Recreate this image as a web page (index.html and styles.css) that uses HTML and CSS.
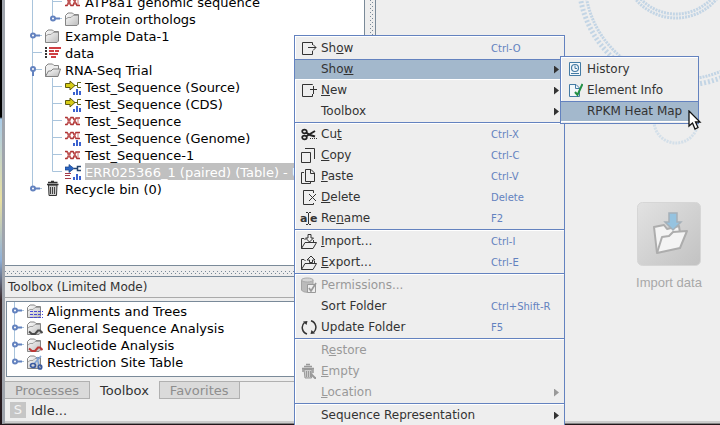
FILE: index.html
```html
<!DOCTYPE html>
<html lang="en">
<head>
<meta charset="utf-8">
<title>Workbench</title>
<link rel="stylesheet" href="styles.css">
</head>
<body>
<svg class="sprite" aria-hidden="true">
  <defs>
    <linearGradient id="metal" x1="0" y1="0" x2="1" y2="1"><stop offset="0" stop-color="#fff"/><stop offset="1" stop-color="#bbb"/></linearGradient>
    <linearGradient id="tile" x1="0" y1="0" x2="1" y2="1"><stop offset="0" stop-color="#e2e2e2"/><stop offset="1" stop-color="#c2c2c2"/></linearGradient>
    <symbol id="bar" viewBox="0 0 20 17"><path class="guide" d="M7.5 0V17"/></symbol>
    <symbol id="tee" viewBox="0 0 20 17"><path class="guide" d="M7.5 0V17M8 8.500H17"/></symbol>
    <symbol id="ell" viewBox="0 0 20 17"><path class="guide" d="M7.500 0V8.500H17"/></symbol>
    <symbol id="closed" viewBox="0 0 20 17"><path class="guide" d="M13 8.500H17"/><path class="knob" d="M10 8.500H15"/><circle class="knob ring" cx="8" cy="8.500" r="2"/></symbol>
    <symbol id="opened" viewBox="0 0 20 17"><path class="guide" d="M10 8.500H17"/><path class="knob" d="M8 10V15"/><circle class="knob ring" cx="8" cy="8" r="2"/></symbol>
    <symbol id="folder" viewBox="0 0 16 17"><path d="M.5 15.500V5.500L3 3H7.500L9 4.500H13.500V14L12 15.500Z" fill="url(#metal)" stroke="#858585"/><path d="M1 9L3 7.500H6L8 5.500H13" fill="none" stroke="#a0a0a0"/></symbol>
    <symbol id="folder-open" viewBox="0 0 16 17"><path d="M.5 15.500V5.500L3 3H7.500L9 4.500H13.500V8" fill="#eee" stroke="#858585"/><path d="M.5 15.500L3.500 10H6L8 8H15.500L13 15.500Z" fill="url(#metal)" stroke="#808080"/></symbol>
    <symbol id="helix" viewBox="0 0 16 17"><path d="M0 5.500H2L6 12.500H8L11 6H15M0 12.500H2L6 5.500H8L12 12.500H15" fill="none" stroke="#b03535" stroke-width="1.600"/><path d="M3 6V12M5 6V12M10 6V12M13 7V12" stroke="#ce7777"/></symbol>
    <symbol id="chart" viewBox="0 0 16 17"><path d="M8 14H10V17H8ZM11 11H13V17H11ZM14 13H16V17H14Z" fill="#3b62cf"/></symbol>
    <symbol id="helix-chart" viewBox="0 0 16 17"><path d="M0 3.500H2L6 9.500H8L11 3.500H15M0 9.500H2L6 3.500H8L11 9.500H15" fill="none" stroke="#b03535" stroke-width="1.600"/><path d="M3 4V9M5 4V9M10 4V9M13 4V9" stroke="#ce7777"/><use href="#chart" width="16" height="17"/></symbol>
    <symbol id="arrow-chart" viewBox="0 0 16 17"><path d="M.5 5.500H5V3L10 7.500L5 12V9.500H.5Z" fill="#d6cc16" stroke="#5f5a10"/><path d="M9 7.500H12M16 4.500H12.500V9.500H16" fill="none" stroke="#626715"/><use href="#chart" width="16" height="17"/></symbol>
    <symbol id="blue-chart" viewBox="0 0 16 17"><path d="M0 4H4V1.500L9 5.500L4 9.500V7H0Z" fill="#2b66c4" stroke="#173f82" stroke-width=".7"/><path d="M9 5.500H12M16 3.500H12.500V7.500H16" fill="none" stroke="#24446f" stroke-width="1.500"/><path d="M0 10.500H6M0 12.500H5M0 15.500H6" stroke="#a53a48"/><use href="#chart" width="16" height="17"/></symbol>
    <symbol id="reads" viewBox="0 0 16 17"><path d="M0 4H2M0 7H2M0 10H2M0 13H2" stroke="#333" stroke-width="2"/><path d="M4 4H16M4 7H9M10 7H14M4 10H13M6 13H11" stroke="#cf3f43" stroke-width="2"/></symbol>
    <symbol id="bin" viewBox="0 0 16 17"><path d="M3.500 5H12L11.500 15.500H4Z" fill="#ccc" stroke="#333"/><path d="M5.500 7V14M7.500 7V14M9.500 7V14" stroke="#444"/><path d="M2 4.500H13.500M3 2.500H12.500M6 1.500H9" stroke="#333" stroke-width="1.400"/></symbol>
    <symbol id="f-align" viewBox="0 0 16 17"><use href="#folder" width="16" height="17"/><path d="M3 9.500H16M3 12.500H16M3 15.500H16" stroke="#4949d5" stroke-dasharray="3 1"/></symbol>
    <symbol id="f-general" viewBox="0 0 16 17"><use href="#folder" width="16" height="17"/><path d="M2 12.500L5 15H8L11 11.500H13L15.500 14" fill="none" stroke="#4a4a4a" stroke-width="2"/></symbol>
    <symbol id="f-nucleo" viewBox="0 0 16 17"><use href="#folder" width="16" height="17"/><path d="M2 12.500L5 15H8L11 11.500H13L15.500 14" fill="none" stroke="#bc3836" stroke-width="2"/></symbol>
    <symbol id="f-restrict" viewBox="0 0 16 17"><use href="#folder" width="16" height="17"/><path d="M14 3L7 11M10 4L12 13" stroke="#7fa3d6" stroke-width="1.500"/><ellipse cx="6" cy="12.500" rx="2.500" ry="2" fill="none" stroke="#3959a0" stroke-width="1.700"/><ellipse cx="13" cy="14" rx="1.700" ry="2" fill="none" stroke="#3959a0" stroke-width="1.700"/></symbol>
    <symbol id="m-show" viewBox="0 0 16 17"><path class="ink" d="M11.500 5V2.500H1.500V14.500H11.500V11M7 7.500H15M12 4.500L15 7.500L12 10.500"/></symbol>
    <symbol id="m-new" viewBox="0 0 16 17"><path class="ink" d="M11.500 3V2.500H1.500V14.500H11.500V12M12.500 4V12M9 7.500H16"/></symbol>
    <symbol id="m-cut" viewBox="0 0 16 17"><ellipse cx="3.500" cy="5.500" rx="2.300" ry="1.800" fill="none" stroke="#222" stroke-width="1.700"/><ellipse cx="3.500" cy="11.500" rx="2.300" ry="1.800" fill="none" stroke="#222" stroke-width="1.700"/><path d="M5 6.500L9 9L14 10.500M5 10.500L9 8L14 5" stroke="#222" stroke-width="2"/><path d="M9 12.500H16" stroke="#333" stroke-dasharray="1 1"/></symbol>
    <symbol id="m-copy" viewBox="0 0 16 17"><path class="ink" d="M.5 5.500H9.500V15.500H.5ZM4 1.500H13.500V12"/></symbol>
    <symbol id="m-paste" viewBox="0 0 16 17"><path class="ink" d="M3 4.500H.5V15.500H9.500V14M4.500 1.500H10L13.500 5V13.500H4.500ZM9.500 1.500V5.500H13.500"/></symbol>
    <symbol id="m-delete" viewBox="0 0 16 17"><path class="ink" d="M12.500 4V1.500H2.500V15.500H12.500V14M8 5L15 12M15 5L8 12"/></symbol>
    <symbol id="m-import" viewBox="0 0 16 17"><path class="ink" d="M.5 15.500V5.500H3L4.500 7M12.500 7V9M.5 15.500L4 9.500H15.500L12 15.500Z"/><path d="M7 1.500H10V5H12.500L8.500 9L4.500 5H7Z" fill="#eee" stroke="#333"/></symbol>
    <symbol id="m-export" viewBox="0 0 16 17"><path class="ink" d="M.5 15.500V5.500H3L4.500 7M13.500 7V9M.5 15.500L4 9.500H15.500L12 15.500Z"/><path d="M8.500 8.500V6H6L10 2L14 6H11.500V8.500Z" fill="#eee" stroke="#333"/></symbol>
    <symbol id="m-perm" viewBox="0 0 16 17"><path d="M.5 3V13C2 16 10 16 12 13V3" fill="#bbb" stroke="#a4a4a4"/><ellipse cx="6.300" cy="3" rx="5.800" ry="2" fill="#d5d5d5" stroke="#aaa"/><path d="M6.500 7.500H14.500V15.500H6.500Z" fill="#eee" stroke="#999"/><path d="M8 11L10 14L15 6" fill="none" stroke="#999" stroke-width="1.700"/></symbol>
    <symbol id="m-update" viewBox="0 0 16 17"><path d="M6 15A6.800 6.800 0 0 1 3.500 3.500M10 1.800A6.800 6.800 0 0 1 12.500 13.500" fill="none" stroke="#333" stroke-width="1.500"/><path d="M2 2.500L6.500 2L5.500 6ZM14 14.500L9.500 15L10.500 11Z" fill="#333"/></symbol>
    <symbol id="m-empty" viewBox="0 0 16 17"><path d="M3 6.500H11L10.500 15H4Z" fill="#ccc" stroke="#999"/><path d="M5.500 8V14M7.500 8V14M9.500 8V14" stroke="#999"/><path d="M1 5.500H13M3 3.500H11M5 1.500H9M12 6V10M2 6V9" stroke="#999" stroke-width="1.500"/><path d="M10 11L14 15H15" fill="none" stroke="#999" stroke-width="2"/></symbol>
    <symbol id="m-history" viewBox="0 0 16 17"><path d="M2.500 1.500H13.500V14.500H2.500Z" fill="#f3f7fa" stroke="#447ba4"/><circle cx="8" cy="7" r="3.500" fill="none" stroke="#447ba4" stroke-width="1.200"/><path d="M8 4.500V7.500H10M4 12.500H12" fill="none" stroke="#447ba4"/></symbol>
    <symbol id="m-info" viewBox="0 0 16 17"><path d="M2.500 2.500H9L12.500 6V14.500H2.500Z" fill="#f3f7fa" stroke="#447ba4"/><path d="M8.500 2.500V6.500H12.500" fill="none" stroke="#447ba4"/><path d="M8 10L10.500 13L15.500 2" fill="none" stroke="#219045" stroke-width="2"/></symbol>
  </defs>
</svg>

<div class="app">
  <aside class="side">
    <ul class="tree nav">
      <li><svg class="g"><use href="#bar"/></svg><svg class="g"><use href="#tee"/></svg><svg class="i"><use href="#helix"/></svg><span>ATP8a1 genomic sequence</span></li>
      <li><svg class="g"><use href="#bar"/></svg><svg class="g"><use href="#ell"/><use href="#closed"/></svg><svg class="i"><use href="#folder"/></svg><span>Protein orthologs</span></li>
      <li><svg class="g"><use href="#bar"/><use href="#closed"/></svg><svg class="i"><use href="#folder"/></svg><span>Example Data-1</span></li>
      <li><svg class="g"><use href="#tee"/></svg><svg class="i"><use href="#reads"/></svg><span>data</span></li>
      <li><svg class="g"><use href="#bar"/><use href="#opened"/></svg><svg class="i"><use href="#folder-open"/></svg><span>RNA-Seq Trial</span></li>
      <li><svg class="g"><use href="#bar"/></svg><svg class="g"><use href="#tee"/></svg><svg class="i"><use href="#arrow-chart"/></svg><span>Test_Sequence (Source)</span></li>
      <li><svg class="g"><use href="#bar"/></svg><svg class="g"><use href="#tee"/></svg><svg class="i"><use href="#arrow-chart"/></svg><span>Test_Sequence (CDS)</span></li>
      <li><svg class="g"><use href="#bar"/></svg><svg class="g"><use href="#tee"/></svg><svg class="i"><use href="#helix"/></svg><span>Test_Sequence</span></li>
      <li><svg class="g"><use href="#bar"/></svg><svg class="g"><use href="#tee"/></svg><svg class="i"><use href="#helix-chart"/></svg><span>Test_Sequence (Genome)</span></li>
      <li><svg class="g"><use href="#bar"/></svg><svg class="g"><use href="#tee"/></svg><svg class="i"><use href="#helix"/></svg><span>Test_Sequence-1</span></li>
      <li><svg class="g"><use href="#bar"/></svg><svg class="g"><use href="#ell"/></svg><svg class="i"><use href="#blue-chart"/></svg><span class="picked">ERR025366_1 (paired) (Table) - U</span></li>
      <li><svg class="g"><use href="#ell"/><use href="#closed"/></svg><svg class="i"><use href="#bin"/></svg><span>Recycle bin (0)</span></li>
    </ul>
    <div class="split-h"></div>
    <h2 class="title">Toolbox (Limited Mode)</h2>
    <ul class="tree tools">
      <li><svg class="g"><use href="#bar"/><use href="#closed"/></svg><svg class="i"><use href="#f-align"/></svg><span>Alignments and Trees</span></li>
      <li><svg class="g"><use href="#bar"/><use href="#closed"/></svg><svg class="i"><use href="#f-general"/></svg><span>General Sequence Analysis</span></li>
      <li><svg class="g"><use href="#bar"/><use href="#closed"/></svg><svg class="i"><use href="#f-nucleo"/></svg><span>Nucleotide Analysis</span></li>
      <li><svg class="g"><use href="#ell"/><use href="#closed"/></svg><svg class="i"><use href="#f-restrict"/></svg><span>Restriction Site Table</span></li>
    </ul>
    <div class="tabs">
      <button class="tab">Processes</button>
      <button class="tab current">Toolbox</button>
      <button class="tab">Favorites</button>
      <span class="rest"></span>
    </div>
    <div class="status"><span class="badge">S</span><span>Idle...</span></div>
  </aside>
  <div class="split-v"></div>
  <main class="main">
    <svg class="rings" viewBox="0 0 144 150" preserveAspectRatio="xMaxYMin meet" fill="none" aria-hidden="true">
      <g stroke="#c3d5e5">
        <circle cx="107" cy="-19" r="98" stroke-width="3" stroke-dasharray="2 1"/>
        <circle cx="107" cy="-19" r="104" stroke-width="5" stroke-dasharray="2 2"/>
        <circle cx="100" cy="-35" r="49" stroke-width="3" stroke-dasharray="2 1"/>
        <circle cx="100" cy="-35" r="53" stroke-width="3" stroke-dasharray="2 1"/>
      </g>
      <circle cx="100" cy="121" r="22" stroke="#d3dfe9" stroke-width="3" stroke-dasharray="2 1"/>
    </svg>
    <button class="import">
      <svg viewBox="0 0 64 64" aria-hidden="true">
        <rect x=".5" y=".5" width="63" height="63" rx="5" fill="url(#tile)" stroke="#d6d6d6"/>
        <path d="M20 51L17 25L27 23L30 27L42 24L43 31" fill="#f4f4f4" stroke="#adadad" stroke-width="2" stroke-linejoin="round"/>
        <path d="M20 51L25 35L32 34L36 30L50 29L43 46Z" fill="#f4f4f4" stroke="#adadad" stroke-width="2" stroke-linejoin="round"/>
        <path d="M32 11H40V20H44L36 28L28 20H32Z" fill="#95c3e0" stroke="#a5b0b8" stroke-width="1.500"/>
      </svg>
      <span>Import data</span>
    </button>
  </main>
</div>

<div class="menu context">
  <button class="item"><svg class="i"><use href="#m-show"/></svg><span>Sh<u>o</u>w</span><kbd>Ctrl-O</kbd></button>
  <button class="item hot"><svg class="i"></svg><span>Sho<u>w</u></span><kbd></kbd><i class="more"></i></button>
  <button class="item"><svg class="i"><use href="#m-new"/></svg><span><u>N</u>ew</span><kbd></kbd><i class="more"></i></button>
  <button class="item"><svg class="i"></svg><span>Toolbox</span><kbd></kbd><i class="more"></i></button>
  <hr>
  <button class="item"><svg class="i"><use href="#m-cut"/></svg><span>Cu<u>t</u></span><kbd>Ctrl-X</kbd></button>
  <button class="item"><svg class="i"><use href="#m-copy"/></svg><span><u>C</u>opy</span><kbd>Ctrl-C</kbd></button>
  <button class="item"><svg class="i"><use href="#m-paste"/></svg><span><u>P</u>aste</span><kbd>Ctrl-V</kbd></button>
  <button class="item"><svg class="i"><use href="#m-delete"/></svg><span><u>D</u>elete</span><kbd>Delete</kbd></button>
  <button class="item"><svg class="i" viewBox="0 0 16 17"><text class="glyph" x="-1" y="12">a</text><text class="glyph" x="9" y="12">e</text><path class="ink" d="M5 2.500H7M8 2.500H10M7.500 3V14M5 14.500H7M8 14.500H10"/></svg><span>Re<u>n</u>ame</span><kbd>F2</kbd></button>
  <hr>
  <button class="item"><svg class="i"><use href="#m-import"/></svg><span><u>I</u>mport...</span><kbd>Ctrl-I</kbd></button>
  <button class="item"><svg class="i"><use href="#m-export"/></svg><span><u>E</u>xport...</span><kbd>Ctrl-E</kbd></button>
  <hr>
  <button class="item" disabled><svg class="i"><use href="#m-perm"/></svg><span>Permissions...</span></button>
  <button class="item"><svg class="i"></svg><span>Sort Folder</span><kbd>Ctrl+Shift-R</kbd></button>
  <button class="item"><svg class="i"><use href="#m-update"/></svg><span>Update Folder</span><kbd>F5</kbd></button>
  <hr>
  <button class="item" disabled><svg class="i"></svg><span>R<u>e</u>store</span></button>
  <button class="item" disabled><svg class="i"><use href="#m-empty"/></svg><span><u>E</u>mpty</span></button>
  <button class="item" disabled><svg class="i"></svg><span><u>L</u>ocation</span><kbd></kbd><i class="more"></i></button>
  <hr>
  <button class="item"><svg class="i"></svg><span>Sequence Representation</span><kbd></kbd><i class="more"></i></button>
</div>

<div class="menu sub">
  <button class="item"><svg class="i"><use href="#m-history"/></svg><span>History</span></button>
  <button class="item"><svg class="i"><use href="#m-info"/></svg><span>Element Info</span></button>
  <button class="item hot"><svg class="i"></svg><span>RPKM Heat Map</span></button>
</div>

<svg class="cursor" viewBox="0 0 14 21" aria-hidden="true"><path d="M1 1V16L4.500 13L7 19L10 17.500L7.500 12H12Z" fill="#fff" stroke="#111" stroke-width="1.300"/></svg>
</body>
</html>
```
FILE: styles.css
```css
* { box-sizing: border-box; }

body {
  margin: 0;
  height: 100vh;
  overflow: hidden;
  padding: 0 0 1px 2px;
  background: linear-gradient(#000 0 117px, #a9cbe8 119px, #e8dfa0 200px, #8fb0d8 260px, #3b2a2c 300px, #21161a);
  font: 13px/17px "DejaVu Sans", sans-serif;
  color: #333;
}

button { font: inherit; color: inherit; border: 0; background: none; padding: 0; text-align: left; }
.sprite { position: absolute; width: 0; height: 0; }

.guide { fill: none; stroke: #a9c4dc; }
.knob { fill: none; stroke: #6382bf; stroke-width: 2; }
.ring { fill: #fff; }
.ink { fill: none; stroke: #333; }
.glyph { font: bold 11px "DejaVu Sans", sans-serif; fill: #333; }

.app {
  height: 100%;
  display: grid;
  grid-template-columns: 45fr 11px 43fr;
  grid-template-rows: minmax(0, 1fr);
  border-left: 3px solid #9fa4ac;
  border-bottom: 1px solid #858585;
  background: #eee;
}

/* left column */
.side { display: flex; flex-direction: column; min-width: 0; border-bottom: 2px solid #ccc; }

.tree { list-style: none; margin: 0; padding: 0; background: #fff; color: #000; overflow: hidden; }
.tree li { display: flex; height: 17px; line-height: 19px; white-space: nowrap; }
.g { flex: none; width: 20px; height: 17px; }
.i { flex: none; width: 16px; height: 17px; margin-right: 4px; overflow: visible; }
.nav { flex: 1; min-height: 0; padding-left: 20px; border-right: 1px solid #7a8a99; border-bottom: 1px solid #7a8a99; }
.nav li:first-child { margin-top: -7px; }
.picked { background: #c0c0c0; color: #fff; }

/* dotted drag handles */
.split-h, .split-v {
  background-image:
    conic-gradient(from 270deg at 1px 1px, #7a8a99 90deg, transparent 0),
    conic-gradient(from 270deg at 1px 1px, #7a8a99 90deg, transparent 0);
  background-size: 4px 4px;
  background-position: 0 0, 2px 2px;
  background-clip: content-box;
  background-origin: content-box;
}
.split-h { height: 11px; padding: 5px 0 2px; border-bottom: 1px solid #7a8a99; }
.split-v { padding: 0 2px 0 5px; border-right: 1px solid #7a8a99; border-bottom: 2px solid #ccc; }

.title { margin: 0; height: 21px; padding: 2px 3px; font: inherit; font-size: 12px; border-bottom: 1px solid #aaa; }
.tools { margin: 3px 0 4px 1px; padding-bottom: 6px; border: 1px solid #7a8a99; }

.tabs { display: flex; height: 18px; }
.tab { height: 18px; padding: 0 10px; line-height: 17px; background: #dadada; border: 1px solid #b0b0b0; color: #8e8e8e; }
.tab:first-child { border-left: 0; }
.current { background: none; border: 0; color: #333; line-height: 19px; }
.rest { flex: 1; border-top: 1px solid #b0b0b0; }

.status { display: flex; align-items: center; gap: 5px; height: 22px; padding-left: 5px; }
.badge { width: 16px; height: 16px; background: #c6c6c6; color: #f4f4f4; line-height: 16px; text-align: center; }

/* right column */
.main { display: flex; flex-direction: column; align-items: flex-end; position: relative; border-bottom: 2px solid #ccc; }
.rings { position: absolute; top: 0; right: 0; width: 100%; height: 150px; }
.import { display: flex; flex-direction: column; align-items: center; margin: 202px 16px 0 0; width: 70px; }
.import svg { width: 64px; height: 64px; }
.import span { margin-top: 8px; font: 13px/18px "Liberation Sans", sans-serif; color: #a8a8a8; white-space: nowrap; }

/* menus */
.menu { position: absolute; padding: 2px 0 1px; background: #eee; border: 1px solid #6382bf; box-shadow: inset 1px 1px #fff; font-size: 12px; }
.context { left: 294px; top: 35px; width: 271px; }
.sub { left: 560px; top: 56px; width: 139px; }
.item { display: flex; align-items: center; width: 100%; height: 21px; padding: 0 5px 0 6px; line-height: 21px; white-space: nowrap; }
.item span { flex: 1; }
.item:disabled { color: #999; }
.item kbd { width: 63px; margin-right: 5px; font: 10px/21px "DejaVu Sans", sans-serif; color: #6382bf; }
.item:has(.more) kbd { margin-right: 0; }
.hot { background: #a3b8cc; border-top: 1px solid #6382bf; border-bottom: 1px solid #fff; line-height: 19px; }
.more { width: 5px; height: 8px; background: currentColor; clip-path: polygon(0 0, 100% 50%, 0 100%); }
.menu hr { margin: 0; height: 2px; border: 0; border-top: 1px solid #6382bf; background: #fff; }

.cursor { position: absolute; left: 688px; top: 110px; width: 14px; height: 21px; }
```
